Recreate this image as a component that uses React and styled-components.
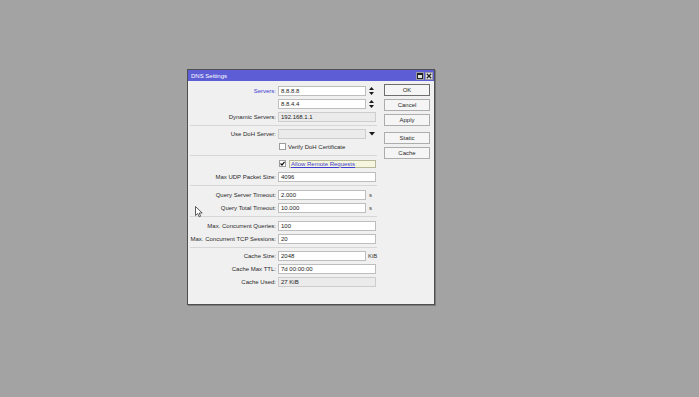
import React from "react";
import styled, { createGlobalStyle } from "styled-components";

const GlobalStyle = createGlobalStyle`
  html, body {
    margin: 0;
    padding: 0;
    background: #a3a3a3;
  }
  body {
    font-family: "Liberation Sans", Arial, sans-serif;
  }
`;

const Page = styled.div`
  position: relative;
  width: 699px;
  height: 397px;
  box-sizing: border-box;
  padding: 69px 0 0 187px;
  background: #a3a3a3;
  overflow: hidden;
`;

const Window = styled.div`
  width: 248px;
  height: 236px;
  box-sizing: border-box;
  border: 1px solid #4f4f4f;
  background: #f0f0f0;
  box-shadow: 1px 1px 0 #7a7a7a;
  display: flex;
  flex-direction: column;
`;

const TitleBar = styled.div`
  height: 11px;
  flex-shrink: 0;
  background: #5d5dd6;
  display: flex;
  align-items: center;
  justify-content: space-between;
  padding: 0 1px 0 3px;
  color: #ffffff;
  font-size: 6px;
`;

const TitleButtons = styled.div`
  display: flex;
  gap: 1px;
`;

const TitleButton = styled.div`
  width: 8px;
  height: 8px;
  box-sizing: border-box;
  background: #e4e4e4;
  border: 1px solid #9a9aa8;
  display: flex;
  align-items: center;
  justify-content: center;
`;

const Body = styled.div`
  display: flex;
  gap: 7px;
  padding: 3px 4px 0 2px;
`;

const Form = styled.div`
  width: 187px;
  display: flex;
  flex-direction: column;
`;

const Row = styled.div`
  display: grid;
  grid-template-columns: 86px 98px;
  column-gap: 2px;
  height: 13px;
  align-items: center;
`;

const Label = styled.div`
  text-align: right;
  font-size: 6px;
  white-space: nowrap;
  color: ${(props) => (props.$accent ? "#3c3cd0" : "#2a2a2a")};
`;

const Field = styled.div`
  display: flex;
  align-items: center;
  gap: ${(props) => props.$gap || 3}px;
`;

const Input = styled.div`
  width: ${(props) => (props.$short ? 88 : 98)}px;
  height: 10px;
  box-sizing: border-box;
  border: 1px solid ${(props) => (props.$readOnly ? "#cdcdcd" : "#bdbdbd")};
  background: ${(props) => (props.$readOnly ? "#ebebeb" : "#ffffff")};
  font-size: 6px;
  color: #222;
  padding-left: 2px;
  display: flex;
  align-items: center;
  flex-shrink: 0;
`;

const Suffix = styled.span`
  font-size: 6px;
  color: #3a3a3a;
`;

const Separator = styled.div`
  height: 1px;
  background: #d6d6d6;
  margin-top: 2px;
  margin-bottom: ${(props) => props.$after || 1}px;
`;

const CheckBox = styled.div`
  width: 7px;
  height: 7px;
  box-sizing: border-box;
  margin-left: 1px;
  border: 1px solid #9c9c9c;
  background: #ffffff;
  display: flex;
  align-items: center;
  justify-content: center;
  flex-shrink: 0;
`;

const CheckText = styled.span`
  font-size: 6px;
  color: #2a2a2a;
`;

const FocusLabel = styled.div`
  width: 88px;
  height: 8px;
  box-sizing: border-box;
  border: 1px solid #b7b79c;
  background: #f6f6de;
  font-size: 6px;
  color: #3c3cd0;
  text-decoration: underline;
  display: flex;
  align-items: center;
  padding-left: 1px;
`;

const Buttons = styled.div`
  width: 46px;
  display: flex;
  flex-direction: column;
  gap: 3px;
`;

const Button = styled.div`
  height: 12px;
  box-sizing: border-box;
  margin-top: ${(props) => props.$push || 0}px;
  border: 1px solid ${(props) => (props.$default ? "#6e6e6e" : "#adadad")};
  background: #f5f5f5;
  font-size: 6px;
  color: #2a2a2a;
  display: flex;
  align-items: center;
  justify-content: center;
`;

const Cursor = styled.svg`
  position: absolute;
  left: 195px;
  top: 206px;
`;

const SpinIcon = () => (
  <svg width="5" height="8" viewBox="0 0 5 8">
    <path d="M2.5 0 L5 3 L0 3 Z M0 5 L5 5 L2.5 8 Z" fill="#1a1a1a" />
  </svg>
);

const DropIcon = () => (
  <svg width="6" height="4" viewBox="0 0 6 4">
    <path d="M0 0 L6 0 L3 3.5 Z" fill="#1a1a1a" />
  </svg>
);

const CheckMark = () => (
  <svg width="5" height="5" viewBox="0 0 5 5">
    <path d="M0.5 2.5 L2 4 L4.6 0.8" stroke="#111" strokeWidth="1.2" fill="none" />
  </svg>
);

const App = () => {
  return (
    <>
      <GlobalStyle />
      <Page>
        <Window>
          <TitleBar>
            <span>DNS Settings</span>
            <TitleButtons>
              <TitleButton>
                <svg width="6" height="6" viewBox="0 0 6 6">
                  <rect x="0.5" y="0.5" width="5" height="5" fill="none" stroke="#222" />
                  <rect x="0.5" y="0.5" width="5" height="1.5" fill="#222" />
                </svg>
              </TitleButton>
              <TitleButton>
                <svg width="6" height="6" viewBox="0 0 6 6">
                  <path d="M0.8 0.8 L5.2 5.2 M5.2 0.8 L0.8 5.2" stroke="#222" strokeWidth="1.3" />
                </svg>
              </TitleButton>
            </TitleButtons>
          </TitleBar>
          <Body>
            <Form>
              <Row>
                <Label $accent>Servers:</Label>
                <Field>
                  <Input $short>8.8.8.8</Input>
                  <SpinIcon />
                </Field>
              </Row>
              <Row>
                <Label />
                <Field>
                  <Input $short>8.8.4.4</Input>
                  <SpinIcon />
                </Field>
              </Row>
              <Row>
                <Label>Dynamic Servers:</Label>
                <Field>
                  <Input $readOnly>192.168.1.1</Input>
                </Field>
              </Row>
              <Separator $after={1} />
              <Row>
                <Label>Use DoH Server:</Label>
                <Field>
                  <Input $short $readOnly />
                  <DropIcon />
                </Field>
              </Row>
              <Row>
                <Label />
                <Field $gap={2}>
                  <CheckBox />
                  <CheckText>Verify DoH Certificate</CheckText>
                </Field>
              </Row>
              <Separator $after={1} />
              <Row>
                <Label />
                <Field $gap={0}>
                  <CheckBox>
                    <CheckMark />
                  </CheckBox>
                  <FocusLabel>Allow Remote Requests</FocusLabel>
                </Field>
              </Row>
              <Row>
                <Label>Max UDP Packet Size:</Label>
                <Field>
                  <Input>4096</Input>
                </Field>
              </Row>
              <Separator $after={2} />
              <Row>
                <Label>Query Server Timeout:</Label>
                <Field>
                  <Input $short>2.000</Input>
                  <Suffix>s</Suffix>
                </Field>
              </Row>
              <Row>
                <Label>Query Total Timeout:</Label>
                <Field>
                  <Input $short>10.000</Input>
                  <Suffix>s</Suffix>
                </Field>
              </Row>
              <Separator $after={2} />
              <Row>
                <Label>Max. Concurrent Queries:</Label>
                <Field>
                  <Input>100</Input>
                </Field>
              </Row>
              <Row>
                <Label>Max. Concurrent TCP Sessions:</Label>
                <Field>
                  <Input>20</Input>
                </Field>
              </Row>
              <Separator $after={1} />
              <Row>
                <Label>Cache Size:</Label>
                <Field $gap={2}>
                  <Input $short>2048</Input>
                  <Suffix>KiB</Suffix>
                </Field>
              </Row>
              <Row>
                <Label>Cache Max TTL:</Label>
                <Field>
                  <Input>7d 00:00:00</Input>
                </Field>
              </Row>
              <Row>
                <Label>Cache Used:</Label>
                <Field>
                  <Input $readOnly>27 KiB</Input>
                </Field>
              </Row>
            </Form>
            <Buttons>
              <Button $default>OK</Button>
              <Button>Cancel</Button>
              <Button>Apply</Button>
              <Button $push={3}>Static</Button>
              <Button>Cache</Button>
            </Buttons>
          </Body>
        </Window>
        <Cursor width="8" height="12" viewBox="0 0 8 12">
          <path
            d="M0.5 0.5 L0.5 9.5 L2.7 7.5 L4.2 10.8 L5.6 10.2 L4.2 7 L7.2 7 Z"
            fill="#ffffff"
            stroke="#333"
            strokeWidth="0.8"
          />
        </Cursor>
      </Page>
    </>
  );
};

export default App;
